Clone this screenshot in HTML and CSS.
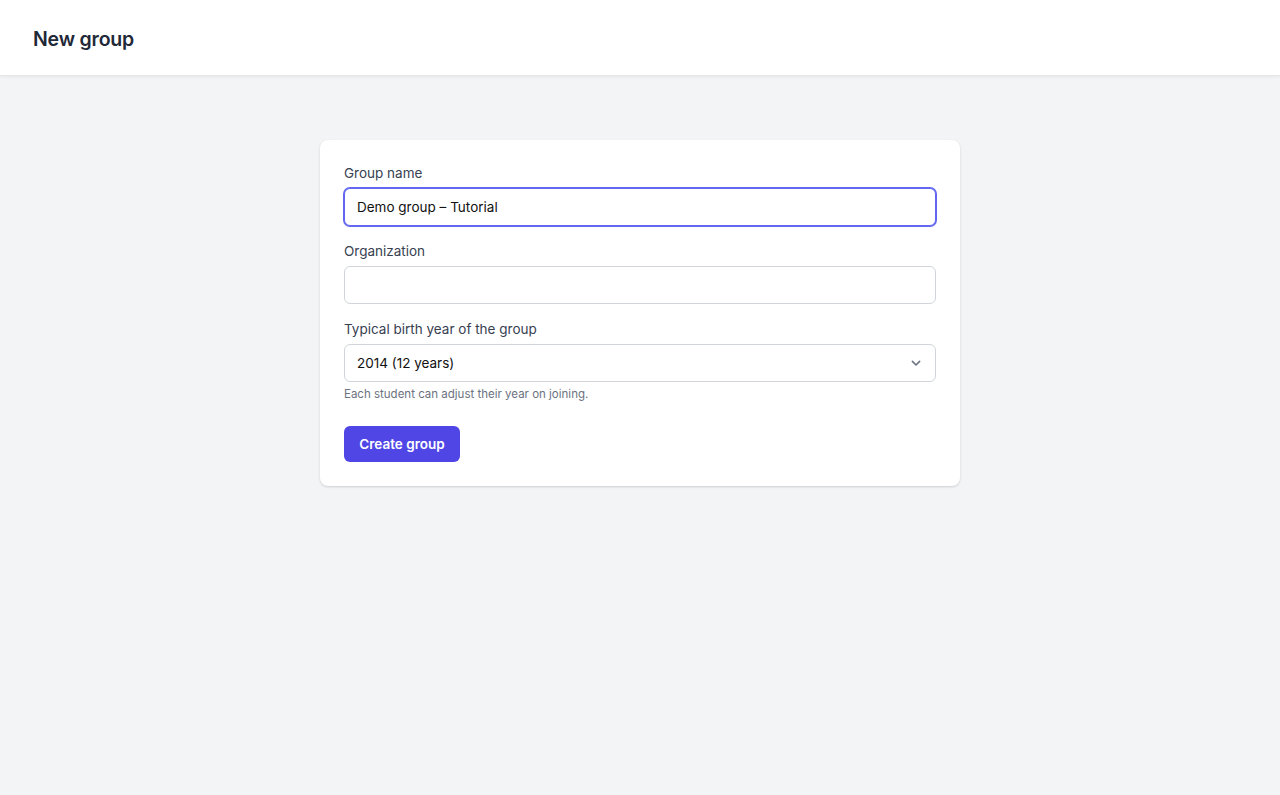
FILE: index.html
```html
<!DOCTYPE html>
<html>
<head>
    <title>New group</title>
    <link rel="stylesheet" href="styles.css">
</head>
<body>
    <header class="topbar">
        <h1 class="page-title">New group</h1>
    </header>

    <main class="content">
        <form class="card">
            <div class="field">
                <label class="label" for="name">Group name</label>
                <input class="input focused" id="name" type="text" value="Demo group – Tutorial">
            </div>

            <div class="field">
                <label class="label" for="org">Organization</label>
                <input class="input" id="org" type="text">
            </div>

            <div class="field">
                <label class="label" for="year">Typical birth year of the group</label>
                <div class="select-wrap">
                    <select class="input select" id="year">
                        <option>2014 (12 years)</option>
                    </select>
                    <svg class="chevron" width="16" height="16" viewBox="0 0 20 20" fill="none">
                        <path d="M5.5 8l4.5 4.5 4.5-4.5" stroke="#6b7280" stroke-width="2" stroke-linecap="round" stroke-linejoin="round"/>
                    </svg>
                </div>
                <p class="hint">Each student can adjust their year on joining.</p>
            </div>

            <div class="actions">
                <button type="button" class="btn-primary">Create group</button>
            </div>
        </form>
    </main>
</body>
</html>
```

FILE: styles.css
```css
body {
    margin: 0;
    font-family: Inter, "Noto Sans", sans-serif;
    background-color: #f3f4f6;
    color: #111827;
    min-height: 100vh;
}

.topbar {
    background-color: #fff;
    height: 75px;
    border-bottom: 1px solid #e5e7eb;
    box-shadow: 0 1px 3px rgba(0, 0, 0, 0.06);
    display: flex;
    align-items: center;
    padding: 2px 33px 0;
    box-sizing: border-box;
    height: 76px;
}

.page-title {
    margin: 0;
    font-size: 19.5px;
    font-weight: 600;
    color: #1f2937;
    letter-spacing: -0.2px;
}

.content {
    display: flex;
    justify-content: center;
    padding-top: 64px;
}

.card {
    width: 640px;
    box-sizing: border-box;
    background-color: #fff;
    border-radius: 8px;
    box-shadow: 0 1px 3px rgba(0, 0, 0, 0.1), 0 1px 2px rgba(0, 0, 0, 0.06);
    padding: 23px 24px 24px;
    display: flex;
    flex-direction: column;
    gap: 15px;
}

.field {
    display: flex;
    flex-direction: column;
}

.label {
    font-size: 13.5px;
    line-height: 20px;
    color: #374151;
    margin-bottom: 5px;
}

.input {
    height: 38px;
    box-sizing: border-box;
    border: 1px solid #d1d5db;
    border-radius: 6px;
    padding: 0 12px;
    font-family: inherit;
    font-size: 13.5px;
    color: #111;
    background-color: #fff;
    outline: none;
    width: 100%;
}

.input.focused {
    border-color: #6366f1;
    box-shadow: 0 0 0 1px #6366f1;
}

.select-wrap {
    position: relative;
}

.select {
    appearance: none;
    -webkit-appearance: none;
}

.chevron {
    position: absolute;
    right: 12px;
    top: 11px;
    pointer-events: none;
}

.hint {
    margin: 4px 0 0;
    font-size: 11.5px;
    line-height: 16px;
    color: #6b7280;
}

.actions {
    padding-top: 9px;
}

.btn-primary {
    height: 36px;
    width: 116px;
    border: none;
    border-radius: 6px;
    background-color: #4f46e5;
    color: #fff;
    font-family: inherit;
    font-size: 13.5px;
    font-weight: 600;
    cursor: pointer;
}
```
